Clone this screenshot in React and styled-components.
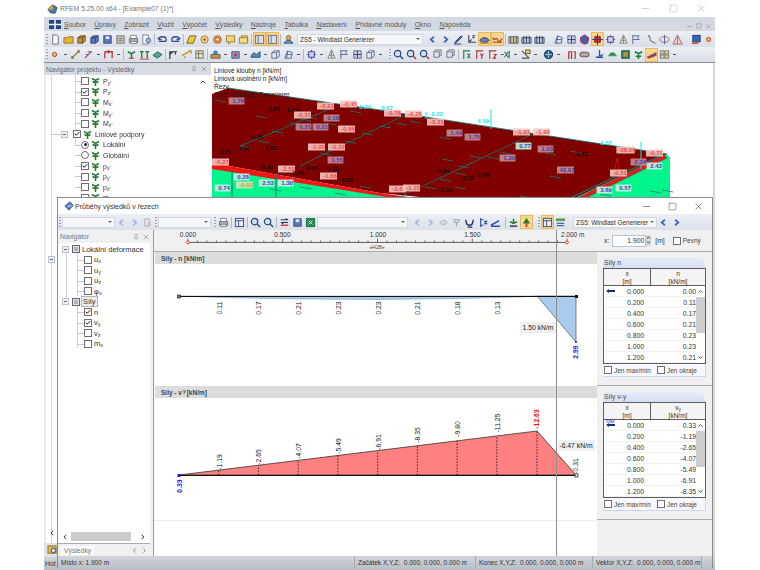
import React from 'react';
import styled, { createGlobalStyle } from 'styled-components';
import { Minus, Square, X, Check, ChevronUp, ChevronDown, ChevronLeft, ChevronRight, Pin } from 'lucide-react';

const GLYPHS = {
  doc: <path d="M3 1h4l2 2v8H3z" fill="#fff" stroke="#667" />,
  fold: <path d="M1 4h4l1-1h5v7H1z" fill="#e6b445" stroke="#9a7420" />,
  boxo: <path d="M2 4l3-2h5v6l-3 2H2zM2 4h5v6M7 4l3-2" fill="#c9913c" stroke="#6d4a18" />,
  boxb: <path d="M2 4l3-2h5v6l-3 2H2zM2 4h5v6M7 4l3-2" fill="#5a79b5" stroke="#2a3f70" />,
  save: <><rect x="2" y="2" width="8" height="8" fill="#5d78bd" stroke="#33457c" /><rect x="4" y="2.5" width="4" height="3" fill="#dfe6f5" /></>,
  calc: <><rect x="2" y="2" width="8" height="8" fill="#c9c2b2" stroke="#777" /><path d="M4 5h4M4 7h4" stroke="#777" /></>,
  print: <><rect x="3" y="1.5" width="6" height="4" fill="#fff" stroke="#888" /><rect x="1.5" y="5" width="9" height="4" fill="#aab" stroke="#777" /><rect x="3" y="8" width="6" height="2.5" fill="#eee" stroke="#888" /></>,
  prev: <><path d="M2 1h6v10H2z" fill="#fff" stroke="#778" /><circle cx="8" cy="7" r="2.5" fill="#9cc3ea" stroke="#35609a" /></>,
  undo: <path d="M2 6a4 3 0 0 1 8 0v2M2 6l-1-2M2 6l3 0M2 8h8" fill="none" stroke="#2d4b8e" strokeWidth="1.4" />,
  redo: <path d="M10 6a4 3 0 0 0-8 0v2M10 6l1-2M10 6l-3 0M2 8h8" fill="none" stroke="#2d4b8e" strokeWidth="1.4" />,
  para: <path d="M4 2h7l-3 8H1z" fill="#e9cf3e" stroke="#7a5a18" />,
  tgt: <><circle cx="6" cy="6" r="4" fill="#f2d58a" stroke="#c86a3a" /><circle cx="6" cy="6" r="1.5" fill="#d24b3a" /></>,
  ring: <><circle cx="6" cy="6" r="4.2" fill="#e8b040" stroke="#a5562a" /><circle cx="6" cy="6" r="2" fill="#fff" stroke="#c0392b" /></>,
  note: <><rect x="1.5" y="2" width="9" height="6.5" fill="#efd779" stroke="#9c8436" /><path d="M4 8.5v2.5l3-2.5" fill="#efd779" stroke="#9c8436" /></>,
  frame: <path d="M1.5 4h9v6h-9zM3.5 4V2h7v6" fill="#f5dc8c" stroke="#a07c20" />,
  pane: <><rect x="1.5" y="1.5" width="9" height="9" fill="#d9dee7" stroke="#6b6f78" /><path d="M4.5 2v8" stroke="#6b6f78" /></>,
  user: <><path d="M1 10l3-3h4l3 3z" fill="#6f96c9" stroke="#2f4f80" /><circle cx="6" cy="4" r="2.4" fill="#e6b445" stroke="#8a6a20" /></>,
  arL: <path d="M7.5 3L4 6l3.5 3" fill="none" stroke="#3a62c9" strokeWidth="1.8" />,
  arR: <path d="M4.5 3L8 6l-3.5 3" fill="none" stroke="#3a62c9" strokeWidth="1.8" />,
  fadeL: <path d="M7.5 3L4 6l3.5 3" fill="none" stroke="#a9bde6" strokeWidth="1.8" />,
  fadeR: <path d="M4.5 3L8 6l-3.5 3" fill="none" stroke="#a9bde6" strokeWidth="1.8" />,
  pen: <path d="M2 10l2-1 6-6-1-1-6 6zM1 11h8" fill="#5f83c4" stroke="#1f3560" />,
  axes: <path d="M3 1v8h8M3 9l3-3M7 2h3M7 4h2" fill="none" stroke="#444" strokeWidth="1.2" />,
  eye: <><path d="M1 7c2-4 8-4 10 0-2 3-8 3-10 0z" fill="#6f7fb5" stroke="#2a2f60" /><path d="M1 10h10" stroke="#c83" strokeWidth="1.5" /></>,
  wave: <path d="M1 4c2 5 3-2 5 2s3 2 5-1M1 9h10" fill="none" stroke="#b1342a" strokeWidth="1.3" />,
  bars: <><path d="M1 3h10v7H1z" fill="#d8c49a" stroke="#555" /><path d="M3 3v7M6 3v7M9 3v7" stroke="#555" /></>,
  barsb: <><path d="M1 4h10v6H1z" fill="#bcc9e6" stroke="#345" /><path d="M3 2v8M6 2v8M9 2v8" stroke="#345" /></>,
  star: <><path d="M2 2h8v8H2z" fill="#c8d0e8" stroke="#667" /><path d="M6 2v8M2 6h8" stroke="#33a" /></>,
  gem: <path d="M6 1l4.5 3-1 6-4 1-3.5-2-.5-5z" fill="#3a62b8" stroke="#b22" />,
  cross: <><path d="M3 3h6v6H3z" fill="#d33" stroke="#712" /><path d="M6 0v12M0 6h12" stroke="#23408a" /></>,
  tower: <path d="M6 1l4 9H2zM6 1v9M3.5 7h5" fill="#e6dfe0" stroke="#887" />,
  flag: <path d="M2 1v10M2 2h7l-2 2 2 2H2" fill="#dfe6f5" stroke="#55658a" />,
  loop: <path d="M2 2c4 0 1 5 4 6s4 1 4 3M2 2h2" fill="none" stroke="#777" strokeWidth="1.2" />,
  disc: <><ellipse cx="6" cy="6" rx="5" ry="3" fill="none" stroke="#c0604a" /><path d="M6 1v10" stroke="#3a62c9" /></>,
  warn: <path d="M6 1l5 10H1zM6 3v8" fill="#e9d6d0" stroke="#a66" />,
  mon: <><rect x="2" y="1.5" width="8" height="7" fill="#3169b5" stroke="#1b3d73" /><path d="M1 10h7" stroke="#c33" strokeWidth="1.5" /></>,
  dot: <circle cx="5" cy="6" r="2.3" fill="#e9c53e" stroke="#b33" />,
  slash: <path d="M2 10L10 2M8 2h2v2M2 8v2h2" fill="none" stroke="#8a6a1c" strokeWidth="1.3" />,
  slash2: <path d="M2 10L9 3M5 3h5M3 6h3" fill="none" stroke="#9c4f8a" strokeWidth="1.3" />,
  nodes: <path d="M2 3h8v7M2 3v7M6 1v4" fill="none" stroke="#b5342c" strokeWidth="1.4" />,
  plant: <><path d="M6 11V4M2 3l4 2 4-2" fill="none" stroke="#1d7a2c" strokeWidth="1.6" /><path d="M3 10h6" stroke="#c0392b" /></>,
  trees: <><path d="M3 4v6M9 4v6M1 3h4M7 3h4" stroke="#1d7a2c" strokeWidth="1.4" /><path d="M1 11h10" stroke="#c33" /></>,
  slab: <path d="M1 7l5-4 5 3-5 4z" fill="#4aa3b0" stroke="#2d6b2a" />,
  crane: <path d="M2 11V3h8M2 6l3-3M8 3v3" fill="none" stroke="#333" strokeWidth="1.3" />,
  beam: <path d="M1 7l8-4M8 2h3v3M3 9h2" fill="none" stroke="#c08a20" strokeWidth="1.5" />,
  grid: <path d="M2 2h8v8H2zM2 5h8M5 2v8" fill="none" stroke="#8a8258" strokeWidth="1.2" />,
  pile: <><path d="M1 6h10v4H1z" fill="#d2913c" stroke="#654" /><circle cx="6" cy="4" r="2.5" fill="#3e7ec2" /></>,
  cubeb: <><path d="M2 3h8v7H2z" fill="#89a7d8" stroke="#2c4a80" /><circle cx="6" cy="6.5" r="2" fill="#d33" /></>,
  blue: <path d="M1 8l3-4 3 2 4-3v6H1z" fill="#4e8fc2" stroke="#214f7a" />,
  cube2: <path d="M2 4l3-2h5v6l-3 2H2zM2 4h5v6M7 4l3-2" fill="#e7e9ef" stroke="#5a6a8a" />,
  net: <path d="M2 10l3-8 5 2-1 6zM5 2l-1 8M3 6l7 0" fill="none" stroke="#4b6aa5" />,
  rnode: <><path d="M1 6h10M6 1v10" stroke="#b33" /><rect x="3" y="3" width="6" height="6" fill="#ccd7ee" stroke="#33a" /></>,
  mag: <><circle cx="5" cy="5" r="3.5" fill="#cfe0f3" stroke="#27457a" strokeWidth="1.3" /><path d="M8 8l3 3" stroke="#c33" strokeWidth="1.5" /></>,
  mag2: <><circle cx="5" cy="5" r="3.5" fill="#cfe0f3" stroke="#27457a" strokeWidth="1.3" /><path d="M8 8l3 3" stroke="#27457a" strokeWidth="1.5" /></>,
  cube3: <path d="M2 3h6v6H2zM4 1h6v6H8M2 3l2-2" fill="#dfe3ea" stroke="#6c7488" />,
  rx: <path d="M2 2h8M3 2v9M7 5l3 5M10 5l-3 5" fill="none" stroke="#2f7a4a" strokeWidth="1.2" />,
  ry: <path d="M2 2h8M3 2v9M7 5l1.5 3 1.5-3M8.5 8v3" fill="none" stroke="#b3342c" strokeWidth="1.2" />,
  rz: <path d="M2 2h8M3 2v9M7 6h3l-3 4h3" fill="none" stroke="#b3342c" strokeWidth="1.2" />,
  xi: <path d="M1 6h3M5 3l4 6M9 3L5 9M10 2v8" fill="none" stroke="#2f7a4a" strokeWidth="1.2" />,
  scale: <><path d="M2 2l8 8M2 10h8" stroke="#555" strokeWidth="1.3" /><path d="M6 1h5v4H6z" fill="#e8d44a" stroke="#555" /></>,
  globe: <><circle cx="6" cy="6" r="4.5" fill="#2a66a8" stroke="#123" /><path d="M6 2v8M2 6h8" stroke="#9cc" /></>,
  curl: <path d="M3 11V3h3v8M8 3h2v8" fill="none" stroke="#a33" strokeWidth="1.3" />,
  pill: <rect x="1" y="3.5" width="10" height="5" rx="2.5" fill="#b8a6a6" stroke="#644" />,
  axisb: <path d="M6 1v7M2 9h8M6 8l4-2" fill="none" stroke="#2c4fb0" strokeWidth="1.4" />,
  hill: <><path d="M1 8c3-6 7-6 10 0z" fill="#27a86a" /><path d="M3 6c2-2 4-2 6 0z" fill="#c33" /></>,
  box3: <><rect x="2" y="2" width="8" height="8" fill="#2aa95f" stroke="#224" /><rect x="4" y="4" width="4" height="4" fill="#e08a2b" /></>,
  green: <path d="M6 11V4M2 3l4 2 4-2M3 8h6" fill="none" stroke="#1d7a2c" strokeWidth="1.7" />,
  blob: <path d="M1 9l10-5v3L3 10z" fill="#3b5cb8" stroke="#c33" />,
  four: <><rect x="1.5" y="2" width="4" height="3.5" fill="#ead990" stroke="#776" /><rect x="6.5" y="2" width="4" height="3.5" fill="#ead990" stroke="#776" /><rect x="1.5" y="6.5" width="4" height="3.5" fill="#ead990" stroke="#776" /><rect x="6.5" y="6.5" width="4" height="3.5" fill="#ead990" stroke="#776" /></>,
  tbl: <><rect x="1.5" y="1.5" width="9" height="9" fill="#e8edf7" stroke="#3a4b78" /><path d="M1.5 4h9M5 4v6" stroke="#3a4b78" /></>,
  grn: <><rect x="1" y="1.5" width="10" height="3" fill="#58a05a" /><path d="M2 7h8M2 9.5h8" stroke="#4a6aa0" strokeWidth="1.3" /></>,
  xls: <><rect x="1.5" y="1.5" width="9" height="9" fill="#2b8a4a" stroke="#175" /><path d="M4 4l4 4M8 4l-4 4" stroke="#fff" /></>,
  swap: <><path d="M2 3h7l-1.5-1.5M10 6H3l1.5 1.5" fill="none" stroke="#1e2c60" strokeWidth="1.3" /><path d="M2 9h8" stroke="#c33" strokeWidth="1.5" /></>,
  ghost: <path d="M2 6c2-3 6-3 8 0-2 3-6 3-8 0z" fill="#d8dbe0" stroke="#aab" />,
  ghost2: <path d="M2 3h8M4 3v3h4V3M6 6v4" fill="none" stroke="#9fb0a8" strokeWidth="1.2" />,
  fade: <><path d="M3 2h5v8H3z" fill="#e4e6ea" stroke="#aab" /><circle cx="8" cy="8" r="2" fill="#e5b5b5" /></>,
  cup: <path d="M2 3c0 4 2 6 4 6s4-2 4-6M4 11h5" fill="none" stroke="#1e2c60" strokeWidth="1.5" />,
  split: <path d="M4 1v10M4 3h3M4 9h3M8 4l3 4M11 4L8 8" fill="none" stroke="#2c4fa0" strokeWidth="1.2" />,
  slope: <path d="M1 9l9-5M1 10h10" fill="none" stroke="#2c4fb0" strokeWidth="1.6" />,
  sup: <><path d="M6 2v4M2 5l4 2 4-2" fill="none" stroke="#1d7a2c" strokeWidth="1.6" /><path d="M2 10h8" stroke="#555" strokeWidth="2" /></>,
  sup2: <><path d="M6 1l4 6H2z" fill="#1d7a2c" /><path d="M6 7v4" stroke="#c33" strokeWidth="2" /></>,
};

const TOP_ROW = ': doc fold boxo boxb save calc print prev | undo redo | para tgt ring note frame | pane* pane* | user _2 @126 _3 arL arR pen axes eye* wave* | bars barsb barsb _6 net star gem cross* rnode tower flag _2 loop disc warn _6 mon dot';
const SECOND_ROW = ': dot - slash slash2 - nodes - | plant trees slab | crane beam grid | pile - cubeb - blue - cube2 net - | rnode - tower flag star cube2 - _4 : mag2 mag mag cube3 cube3 | rx ry rz xi - scale - _3 globe - _3 curl pill _2 axisb hill box3 green blob* four -';
const DIALOG_ROW = ': #53 fadeL fadeR fade : #53 _2 : print | tbl | mag2 mag2 | swap save xls #91 _3 fadeL fadeR ghost ghost2 cup split slope _2 | sup sup2* _4 : tbl* grn _6 @84 arL arR';

const GEOMETRY_LABELS = [
  ['b', 238, 100, '1.76'], ['k', 274, 108, '0.03'], ['k', 293, 109, '0.24'], ['r', 304, 114, '-0.31'], ['b', 305, 126, '0.21'],
  ['b', 322, 126, '0.21'], ['r', 348, 128, '-0.66'], ['b', 333, 117, '0.18'], ['r', 327, 105, '-0.21'], ['r', 350, 103, '-0.45'],
  ['r', 318, 146, '-1.00'], ['r', 338, 146, '-0.22'], ['b', 337, 159, '1.55'], ['k', 257, 136, '0.45'], ['k', 244, 148, '4.06'],
  ['k', 271, 147, '1.03'], ['k', 225, 151, '2.75'], ['r', 222, 161, '-5.27'], ['r', 288, 168, '-2.50'], ['r', 330, 175, '-1.66'],
  ['g', 243, 176, '0.28'], ['g', 224, 187, '0.74'], ['y', 246, 184, '-0.03'], ['g', 268, 182, '2.53'], ['g', 287, 182, '1.30'],
  ['k', 267, 166, '0.19'], ['k', 312, 167, '0.83'], ['k', 298, 172, '2.43'], ['k', 333, 168, '1.28'], ['k', 347, 179, '0.55'],
  ['r', 394, 112, '-0.78'], ['r', 415, 113, '-0.26'], ['r', 437, 121, '-0.21'], ['b', 456, 132, '1.44'], ['b', 474, 136, '1.75'],
  ['c', 483, 120, '4.59'], ['r', 523, 131, '-1.93'], ['r', 543, 131, '-1.90'], ['c', 606, 142, '1.57'], ['g', 525, 145, '0.77'],
  ['b', 547, 148, '1.03'], ['b', 509, 157, '1.30'], ['b', 567, 169, '42.03'], ['r', 627, 149, '-38.06'], ['r', 656, 152, '-0.71'],
  ['b', 640, 161, '2.34'], ['g', 656, 165, '2.43'], ['r', 620, 172, '-0.51'], ['g', 606, 189, '3.69'], ['g', 625, 187, '0.57'],
  ['r', 399, 188, '-3.61'], ['r', 413, 187, '-1.15'], ['k', 582, 153, '9.71'], ['k', 446, 189, '0.34'], ['k', 468, 177, '6.39'], ['k', 483, 174, '2.08'],
  ['k', 444, 170, '9.94'], ['c', 387, 107, '0.67'], ['c', 437, 113, '0.22'], ['c', 365, 106, '0.24'],
];

const DASHES = [
  [215, 99], [256, 115], [300, 118], [325, 122], [350, 110], [240, 145], [258, 140], [272, 130], [290, 122], [306, 116],
  [320, 152], [345, 140], [362, 132], [440, 136], [488, 156], [442, 158], [500, 151], [550, 175], [458, 165], [440, 178],
  [455, 172], [410, 120], [396, 122], [380, 125], [470, 155], [520, 143], [545, 152], [570, 150], [650, 190], [662, 189],
  [235, 178], [270, 188], [300, 186], [335, 192], [360, 185], [425, 186], [455, 186], [520, 195], [600, 193],
];

const LABEL_BACK = { r: '#f4c5c0', b: '#c58b8b', g: '#c8f3e0', y: '#d3e8b8' };
const LABEL_TEXT = { r: '#ef4a4a', b: '#3d3cc0', g: '#3d3cc0', y: '#c9a040', k: '#111', c: '#19e4f0' };

const NUMBERS_N = ['0.00', '0.11', '0.17', '0.21', '0.23', '0.23', '0.21'];
const NUMBERS_V = ['0.33', '-1.19', '-2.65', '-4.07', '-5.49', '-6.91', '-8.35'];
const X_VALUES = ['0.000', '0.200', '0.400', '0.600', '0.800', '1.000', '1.200'];
const N_CHART = ['0.11', '0.17', '0.21', '0.23', '0.23', '0.21', '0.18', '0.13'];
const V_CHART = ['-1.19', '-2.65', '-4.07', '-5.49', '-6.91', '-8.35', '-9.80', '-11.25'];
const V_CENTERS = [462, 457, 451, 446, 442, 435, 429, 423];
const station = i => 179 + i * 39.73;

const Glyph = ({ kind }) => (
  <svg width="12" height="12" viewBox="0 0 12 12">{GLYPHS[kind]}</svg>
);

const Tools = ({ items, text }) => (
  <>
    {items.split(' ').map((token, i) => {
      if (token === '|') return <Sep key={i} />;
      if (token === ':') return <Grip key={i} />;
      if (token === '-') return <Caret key={i} />;
      if (token[0] === '_') return <Gap key={i} $w={Number(token.slice(1))} />;
      if (token[0] === '#' || token[0] === '@') {
        return (
          <Combo key={i} $w={Number(token.slice(1))}>
            <ComboText>{token[0] === '@' ? text : ''}</ComboText>
            <ComboArrow />
          </Combo>
        );
      }
      const active = token.endsWith('*');
      return <Tool key={i} $active={active}><Glyph kind={active ? token.slice(0, -1) : token} /></Tool>;
    })}
  </>
);

const CheckMark = ({ checked, radio, on }) => {
  if (radio) return <RadioBox>{on && <RadioDot />}</RadioBox>;
  return <Box>{checked && <Check size={6} strokeWidth={4} color="#111" />}</Box>;
};

const LeafIcon = () => (
  <svg width="9" height="9" viewBox="0 0 9 9">
    <path d="M4.5 9V3M1 1.5l3.5 2 3.5-2M1.5 4.5l3 1.5 3-1.5" fill="none" stroke="#1d7a2c" strokeWidth="1.5" />
  </svg>
);

const MainRow = ({ base, sub, checked, radio, on }) => (
  <LeafRow>
    <CheckMark checked={checked} radio={radio} on={on} />
    <LeafIcon />
    <LeafLabel>{base}{sub && <sub>{sub}</sub>}</LeafLabel>
  </LeafRow>
);

const NavLeaf = ({ base, sub, checked }) => (
  <NavLeafRow>
    <CheckMark checked={checked} />
    <NavLeafText>{base}<sub>{sub}</sub></NavLeafText>
  </NavLeafRow>
);

const ValueTable = ({ head, sub, values, flag }) => (
  <TableFrame>
    <TableHead>
      <HeadCell $w={47}>x<br />[m]</HeadCell>
      <HeadCell $w={54}>{head}{sub && <sub>{sub}</sub>}<br />[kN/m]</HeadCell>
    </TableHead>
    <TableBody>
      <div>
        {values.map((value, i) => (
          <TableRow key={value + i}>
            <MarkerCell>
              {i === 0 && (
                <>
                  {flag && <MaxTag>max</MaxTag>}
                  <svg width="9" height="4" viewBox="0 0 9 4"><path d="M0 2l3-2v1h6v2H3v1z" fill="#1a2a80" /></svg>
                </>
              )}
            </MarkerCell>
            <XCell>{X_VALUES[i]}</XCell>
            <ValueCell>{value}</ValueCell>
          </TableRow>
        ))}
      </div>
      <VScroll>
        <ChevronUp size={7} strokeWidth={3} />
        <VThumb />
        <ChevronDown size={7} strokeWidth={3} />
      </VScroll>
    </TableBody>
  </TableFrame>
);

const Group = ({ title, ...rest }) => (
  <SideGroup>
    <GroupTab>{title}</GroupTab>
    <ValueTable {...rest} />
    <GroupChecks>
      <LabelledBox><Box />Jen max/min</LabelledBox>
      <LabelledBox><Box />Jen okraje</LabelledBox>
    </GroupChecks>
  </SideGroup>
);

const Scene = () => (
  <SceneSvg viewBox="212 62 501 135" preserveAspectRatio="none">
    <path d="M212 164L380 193L575 240L670 197V157L667 153L575 197H212z" fill="#00f58c" />
    <path d="M212 93L228 87L380 109L667 153L575 197H430L380 192L212 162z" fill="#800000" />
    <path d="M212 162L380 192L430 199L437 204L212 168z" fill="#f01616" />
    <path d="M577 197L664 154L667 157L586 197z" fill="#f01616" stroke="#137a70" strokeWidth=".6" />
    <g stroke="#0c7d74" strokeWidth=".8" fill="none">
      <path d="M228 87L380 109L667 153" />
      <path d="M240 145L330 108M300 165L407 113M423 185L533 133M380 205L423 185" />
      <path d="M232 168V197M276 172V197M570 197L664 153" strokeWidth="1.1" />
      {DASHES.map(([x, y]) => <path key={`${x}-${y}`} d={`M${x} ${y}l11 2`} />)}
    </g>
    <path d="M491 108V128M641 141V168M426 111V118" stroke="#19e4f0" strokeWidth="1" />
    <path d="M617 157L620 173M617 157L614 172" stroke="#e01818" strokeWidth=".7" />
    <g fontSize="6.5" fill="#222">
      <text x="214" y="72">Liniové klouby n [kN/m]</text>
      <text x="214" y="80">Liniová uvolnění n [kN/m]</text>
      <text x="214" y="88">Řezy</text>
      <text x="214" y="96">ZS5 - Windlast Generierer</text>
    </g>
    {GEOMETRY_LABELS.map(([type, x, y, text]) => (
      <g key={`${x}-${y}`}>
        {LABEL_BACK[type] && (
          <rect x={x - 7 - text.length * 0.6} y={y - 3.5} width={11 + text.length * 1.2} height="7" fill={LABEL_BACK[type]} fillOpacity=".9" />
        )}
        <SceneLabel x={x} y={y + 2.2} fill={LABEL_TEXT[type]}>{text}</SceneLabel>
      </g>
    ))}
  </SceneSvg>
);

const Ruler = () => (
  <RulerSvg viewBox="154 230 443 22">
    {[[179, '0.000'], [278, '0.500'], [378, '1.000'], [477, '1.500'], [582, '2.000 m']].map(([x, label]) => (
      <ChartText key={label} x={x} y={237} textAnchor="middle" fill="#333">{label}</ChartText>
    ))}
    <path d="M179 243H577" stroke="#555" />
    {Array.from({ length: 41 }, (_, i) => {
      const x = 179 + i * 9.93;
      const long = i % 10 === 0;
      return <path key={i} d={`M${x} ${long ? 239 : 241}V243`} stroke="#444" strokeWidth=".8" />;
    })}
    <circle cx="179" cy="243" r="1.5" fill="#fff" stroke="#e33" />
    <circle cx="576" cy="243" r="1.5" fill="#fff" stroke="#e33" />
    <ChartText x={377} y={250} textAnchor="middle" $size={5.5} fill="#444">»H28»</ChartText>
  </RulerSvg>
);

const ForceChart = () => (
  <ChartSvg viewBox="154 264 443 122">
    <path d="M179 296L220 297.5L300 299L378 299.5L457 298.5L520 297L537 296z" fill="#a9cbee" stroke="#6f8db0" strokeWidth=".5" />
    <path d="M537 296H576V342z" fill="#a9cbee" stroke="#555" strokeWidth=".7" />
    <path d="M179 296.5H576" stroke="#111" strokeWidth="1.2" />
    <rect x="177.5" y="295" width="3" height="3" fill="#777" stroke="#111" strokeWidth=".6" />
    <rect x="575" y="295" width="3" height="3" fill="#111" />
    {N_CHART.map((value, i) => (
      <ChartText key={i} transform={`rotate(-90 ${station(i + 1) + 1} 308)`} x={station(i + 1) + 1} y={310} textAnchor="middle" fill="#222">{value}</ChartText>
    ))}
    <ChartText transform="rotate(-90 576 352)" x={576} y={354} textAnchor="middle" fill="#1a1aee" fontWeight="700">2.99</ChartText>
    <circle cx="576" cy="342" r="1" fill="#1a1aee" />
    <rect x="520" y="322" width="36" height="11" fill="#f0f0f0" />
    <ChartText x={538} y={330} textAnchor="middle" fill="#222">1.50 kN/m</ChartText>
  </ChartSvg>
);

const ShearChart = () => (
  <ChartSvg viewBox="154 398 443 122">
    <path d="M179 475L537 431L576 475z" fill="#ff8080" stroke="#333" strokeWidth=".8" />
    {V_CHART.map((value, i) => {
      const x = station(i + 1);
      return <path key={value} d={`M${x} 475V${475 - 44 * ((x - 179) / 358)}`} stroke="#111" strokeWidth=".8" strokeDasharray="1.5 1.5" />;
    })}
    <path d="M537 475V431" stroke="#111" strokeWidth=".8" strokeDasharray="1.5 1.5" />
    <path d="M179 475.5H577" stroke="#111" strokeWidth="1.2" />
    <rect x="177.5" y="474" width="3" height="3" fill="#1a1aee" />
    <rect x="575" y="474" width="3" height="3" fill="#fff" stroke="#111" strokeWidth=".7" />
    {V_CHART.map((value, i) => (
      <ChartText key={i} transform={`rotate(-90 ${station(i + 1) + 1} ${V_CENTERS[i]})`} x={station(i + 1) + 1} y={V_CENTERS[i] + 2} textAnchor="middle" fill="#222">{value}</ChartText>
    ))}
    <ChartText transform="rotate(-90 537 419)" x={537} y={421} textAnchor="middle" fill="#f01010" fontWeight="700">-12.63</ChartText>
    <ChartText transform="rotate(-90 576 466)" x={576} y={468} textAnchor="middle" fill="#222">-0.31</ChartText>
    <ChartText transform="rotate(-90 180 486)" x={180} y={488} textAnchor="middle" fill="#1a1aee" fontWeight="700">0.33</ChartText>
    <rect x="558" y="440" width="37" height="11" fill="#f0f0f0" />
    <ChartText x={576} y={448} textAnchor="middle" fill="#222">-6.47 kN/m</ChartText>
  </ChartSvg>
);

export default function App() {
  const menu = ['Soubor', 'Úpravy', 'Zobrazit', 'Vložit', 'Výpočet', 'Výsledky', 'Nástroje', 'Tabulka', 'Nastavení', 'Přídavné moduly', 'Okno', 'Nápověda'];
  return (
    <>
      <Global />
      <Page>
        <MainWindow>
          <TitleBar>
            <svg width="11" height="11" viewBox="0 0 12 12"><path d="M1 7l5-5 5 3-2 6-5 0z" fill="#4d78ad" stroke="#34506e" /><path d="M6 2l1 5-6 0" fill="#d9a441" /></svg>
            <TitleText>RFEM 5.25.00 x64 - [Example07 (1)*]</TitleText>
            <WindowButtons $gap={18} $faded>
              <Minus size={11} strokeWidth={1} />
              <Square size={9} strokeWidth={1} />
              <X size={11} strokeWidth={1} />
            </WindowButtons>
          </TitleBar>
          <MenuBar>
            <svg width="12" height="9" viewBox="0 0 12 9"><rect width="12" height="9" fill="#23438a" /><path d="M0 4.5h12M6 0v9" stroke="#fff" strokeWidth="1.5" /></svg>
            <MenuItems>
              {menu.map(item => <MenuItem key={item}><u>{item[0]}</u>{item.slice(1)}</MenuItem>)}
            </MenuItems>
            <MdiButtons>
              <Minus size={7} strokeWidth={2} />
              <Square size={6} strokeWidth={2} />
              <X size={7} strokeWidth={2} />
            </MdiButtons>
          </MenuBar>
          <ToolRow><Tools items={TOP_ROW} text="ZS5 - Windlast Generierer" /></ToolRow>
          <ToolRow $last><Tools items={SECOND_ROW} /></ToolRow>
          <Workspace>
            <ProjectNav>
              <PaneHeader>
                <span>Navigátor projektu - Výsledky</span>
                <PaneIcons><Pin size={6} /><X size={8} /></PaneIcons>
              </PaneHeader>
              <ProjectTree>
                <ScrollHint><ChevronUp size={8} strokeWidth={3} /></ScrollHint>
                <MainRow base="P" sub="y'" />
                <MainRow base="P" sub="z'" checked />
                <MainRow base="M" sub="x'" />
                <MainRow base="M" sub="y'" />
                <MainRow base="M" sub="z'" />
                <ParentRow>
                  <Toggle />
                  <CheckMark checked />
                  <LeafIcon />
                  <LeafLabel>Liniové podpory</LeafLabel>
                </ParentRow>
                <MainRow base="Lokální" radio on />
                <MainRow base="Globální" radio />
                <MainRow base="p" sub="x'" checked />
                <MainRow base="p" sub="y'" />
                <MainRow base="p" sub="z'" />
                <MainRow base="m" sub="x'" />
                <StubToggle><Toggle /></StubToggle>
                <BottomScroll><ChevronLeft size={8} strokeWidth={3} /></BottomScroll>
              </ProjectTree>
              <TabStrip>
                <svg width="11" height="10" viewBox="0 0 12 11"><rect x="1" y="1" width="9" height="8" fill="#e8b64a" stroke="#8a6a20" /><circle cx="7" cy="6" r="2.5" fill="#cfe0f3" stroke="#27457a" /></svg>
              </TabStrip>
            </ProjectNav>
            <Viewport><Scene /></Viewport>
          </Workspace>
          <MainStatus>Hot</MainStatus>
        </MainWindow>

        <Dialog>
          <DialogTitle>
            <svg width="10" height="10" viewBox="0 0 12 12"><path d="M1 6l6-5 4 4-5 6z" fill="#5b84b8" stroke="#2f5080" /><path d="M4 6h5" stroke="#dfe8f5" /></svg>
            <DialogTitleText>Průběhy výsledků v řezech</DialogTitleText>
            <WindowButtons $gap={16}>
              <Minus size={11} strokeWidth={1.2} />
              <Square size={9} strokeWidth={1.2} />
              <X size={11} strokeWidth={1.2} />
            </WindowButtons>
          </DialogTitle>
          <DialogTools><Tools items={DIALOG_ROW} text="ZS5: Windlast Generierer" /></DialogTools>
          <DialogBody>
            <DialogNav>
              <PaneHeaderLight>
                <span>Navigátor</span>
                <PaneIcons><Pin size={6} /><X size={8} /></PaneIcons>
              </PaneHeaderLight>
              <DialogTree>
                <TreeHead><Toggle /><SquareMark /><span>Lokální deformace</span></TreeHead>
                <NavLeaf base="u" sub="x" />
                <NavLeaf base="u" sub="y" />
                <NavLeaf base="u" sub="z" />
                <NavLeaf base="φ" sub="x" />
                <TreeHead><Toggle /><SquareMark /><Focused>Síly</Focused></TreeHead>
                <NavLeaf base="n" checked />
                <NavLeaf base="v" sub="y" checked />
                <NavLeaf base="v" sub="z" />
                <NavLeaf base="m" sub="x" />
                <HScroll>
                  <ChevronLeft size={8} strokeWidth={3} />
                  <HThumb />
                  <ChevronRight size={8} strokeWidth={3} />
                </HScroll>
              </DialogTree>
              <NavTabs>
                <NavTab>Výsledky</NavTab>
                <TabArrows><ChevronLeft size={7} strokeWidth={3} /><ChevronRight size={7} strokeWidth={3} /></TabArrows>
              </NavTabs>
            </DialogNav>
            <ChartColumn>
              <Ruler />
              <SectionHead>Síly - n [kN/m]</SectionHead>
              <ForceChart />
              <SectionHead>Síly - v<sub>y</sub> [kN/m]</SectionHead>
              <ShearChart />
              <ChartFoot />
              <CursorLine />
            </ChartColumn>
            <SidePanel>
              <XRow>
                <span>x:</span>
                <XInput>1.900</XInput>
                <Spinner><ChevronUp size={5} strokeWidth={4} /><ChevronDown size={5} strokeWidth={4} /></Spinner>
                <XUnit>[m]</XUnit>
                <LabelledBox><Box />Pevný</LabelledBox>
              </XRow>
              <SideSection>
                <Group title="Síly n" head="n" values={NUMBERS_N} />
              </SideSection>
              <SideSection>
                <Group title="Síly v-y" head="v" sub="y" values={NUMBERS_V} flag />
              </SideSection>
            </SidePanel>
          </DialogBody>
          <DialogStatus>
            <StatusCell $grow>Místo x: 1.900 m</StatusCell>
            <StatusCell $w={121}>Začátek X,Y,Z:&nbsp;&nbsp;0.000, 0.000, 0.000 m</StatusCell>
            <StatusCell $w={117}>Konec X,Y,Z:&nbsp;&nbsp;0.000, 0.000, 0.000 m</StatusCell>
            <StatusCell $w={109}>Vektor X,Y,Z:&nbsp;&nbsp;0.000, 0.000, 0.000 m</StatusCell>
            <StatusCell $w={11} />
          </DialogStatus>
        </Dialog>
      </Page>
    </>
  );
}

const Global = createGlobalStyle`
  html, body {
    margin: 0;
    background: #fff;
    overflow: hidden;
  }
  sub {
    font-size: 0.75em;
    line-height: 0;
    vertical-align: -0.2em;
  }
`;

const Page = styled.div`
  position: relative;
  width: 760px;
  height: 570px;
  padding-left: 44px;
  box-sizing: border-box;
  font-family: "Liberation Sans", Arial, sans-serif;
  font-size: 6.8px;
  color: #333;
  filter: blur(0.45px);
`;

const MainWindow = styled.div`
  display: flex;
  flex-direction: column;
  width: 671px;
  height: 570px;
`;

const TitleBar = styled.div`
  display: flex;
  align-items: center;
  height: 17px;
  padding-left: 3px;
  background: #fff;
  flex: none;
`;

const TitleText = styled.span`
  margin-left: 2px;
  color: #777;
`;

const WindowButtons = styled.div`
  display: flex;
  align-items: center;
  gap: ${p => p.$gap}px;
  margin-left: auto;
  padding-right: 8px;
  color: ${p => (p.$faded ? '#999' : '#333')};
`;

const MenuBar = styled.div`
  display: flex;
  align-items: center;
  height: 14px;
  padding-left: 5px;
  background: #d3d9e3;
  flex: none;
`;

const MenuItems = styled.div`
  display: flex;
  gap: 8.4px;
  margin-left: 3px;
`;

const MenuItem = styled.span`
  color: #555;
`;

const MdiButtons = styled.div`
  display: flex;
  align-items: center;
  gap: 3px;
  margin-left: auto;
  padding: 4px 3px 0 0;
  color: #888;
`;

const ToolRow = styled.div`
  display: flex;
  align-items: center;
  height: ${p => (p.$last ? 15 : 16)}px;
  padding-left: 1px;
  background: linear-gradient(#eceff4, #d9dee7);
  border-bottom: ${p => (p.$last ? '1px solid #8a8d92' : '0')};
  flex: none;
  overflow: hidden;
`;

const DialogTools = styled.div`
  display: flex;
  align-items: center;
  height: 16px;
  background: linear-gradient(#eceff4, #dde1e9);
  flex: none;
  overflow: hidden;
`;

const Tool = styled.div`
  display: flex;
  align-items: center;
  justify-content: center;
  width: 13px;
  height: 14px;
  flex: none;
  box-sizing: border-box;
  background: ${p => (p.$active ? '#fbd68a' : 'transparent')};
  box-shadow: ${p => (p.$active ? 'inset 0 0 0 1px #e9b96a' : 'none')};
  & svg {
    width: 11px;
    height: 11px;
  }
`;

const Sep = styled.div`
  width: 1px;
  height: 11px;
  margin: 0 1px;
  background: #b4b9c2;
  flex: none;
`;

const Grip = styled.div`
  width: 2px;
  height: 11px;
  margin: 0 1px;
  flex: none;
  background: repeating-linear-gradient(#9aa0aa 0 1px, transparent 1px 3px);
`;

const Caret = styled.div`
  width: 7px;
  height: 1px;
  flex: none;
  background: linear-gradient(90deg, transparent 2px, #555 2px 5px, transparent 5px);
`;

const Gap = styled.div`
  width: ${p => p.$w}px;
  flex: none;
`;

const Combo = styled.div`
  display: flex;
  align-items: center;
  justify-content: space-between;
  width: ${p => p.$w}px;
  height: 11px;
  background: #f6f7f9;
  border: 1px solid #d5d8de;
  box-sizing: border-box;
  flex: none;
`;

const ComboText = styled.span`
  padding-left: 2px;
  font-size: 6.4px;
  white-space: nowrap;
  color: #333;
`;

const ComboArrow = styled.span`
  width: 0;
  height: 0;
  margin-right: 2px;
  flex: none;
  border-left: 2px solid transparent;
  border-right: 2px solid transparent;
  border-top: 2px solid #666;
`;

const Workspace = styled.div`
  display: flex;
  flex: 1;
  min-height: 0;
`;

const ProjectNav = styled.div`
  display: flex;
  flex-direction: column;
  width: 167px;
  background: #e9ebef;
  flex: none;
`;

const PaneHeader = styled.div`
  display: flex;
  align-items: center;
  justify-content: space-between;
  height: 12px;
  padding: 0 3px 0 2px;
  background: #d7dce4;
  color: #666;
  font-size: 6.8px;
  flex: none;
`;

const PaneHeaderLight = styled(PaneHeader)`
  height: 13px;
  background: #eff0f2;
  color: #777;
`;

const PaneIcons = styled.div`
  display: flex;
  align-items: center;
  gap: 3px;
  color: #888;
`;

const ProjectTree = styled.div`
  position: relative;
  display: flex;
  flex-direction: column;
  flex: 1;
  margin-left: 2px;
  padding-top: 1px;
  background-color: #fff;
  background-image:
    linear-gradient(#d6d6d6, #d6d6d6),
    linear-gradient(#d6d6d6, #d6d6d6);
  background-size: 1px 100%, 1px 70px;
  background-position: 5px 0, 29px 0;
  background-repeat: no-repeat;
`;

const ScrollHint = styled.div`
  position: absolute;
  right: 4px;
  top: 3px;
  display: flex;
  color: #444;
`;

const LeafRow = styled.div`
  position: relative;
  display: flex;
  align-items: center;
  gap: 2px;
  height: 10.6px;
  padding-left: 35px;
  flex: none;
  &::before {
    content: '';
    position: absolute;
    left: 29px;
    top: 5px;
    width: 6px;
    height: 1px;
    background: #c9c9c9;
  }
`;

const ParentRow = styled(LeafRow)`
  padding-left: 15px;
  &::before {
    left: 5px;
    width: 10px;
  }
`;

const LeafLabel = styled.span`
  margin-left: 1px;
  font-size: 7px;
  color: #333;
`;

const Toggle = styled.span`
  position: relative;
  width: 5px;
  height: 5px;
  margin-right: 3px;
  border: 1px solid #bcc2cc;
  background: #eef1f6;
  flex: none;
  &::after {
    content: '';
    position: absolute;
    left: 1px;
    top: 2px;
    width: 3px;
    height: 1px;
    background: #667;
  }
`;

const Box = styled.span`
  display: inline-flex;
  align-items: center;
  justify-content: center;
  width: 6px;
  height: 6px;
  border: 1px solid #6f6f6f;
  background: #fff;
  box-sizing: content-box;
  flex: none;
`;

const RadioBox = styled(Box)`
  border-radius: 50%;
`;

const RadioDot = styled.span`
  width: 3px;
  height: 3px;
  border-radius: 50%;
  background: #222;
`;

const StubToggle = styled.div`
  display: flex;
  margin-top: 53px;
  padding-left: 2px;
`;

const BottomScroll = styled.div`
  display: flex;
  margin-top: auto;
  padding: 0 0 6px 2px;
  color: #333;
`;

const TabStrip = styled.div`
  display: flex;
  align-items: center;
  height: 14px;
  padding-left: 3px;
  background: #e0e2e6;
  flex: none;
`;

const Viewport = styled.div`
  flex: 1;
  margin-left: 1px;
  border-right: 2px solid #d8d8d8;
  background: #fff;
  min-width: 0;
`;

const SceneSvg = styled.svg`
  display: block;
  width: 501px;
  height: 135px;
  font-family: "Liberation Sans", Arial, sans-serif;
`;

const SceneLabel = styled.text`
  font-size: 6px;
  font-weight: 700;
  text-anchor: middle;
`;

const MainStatus = styled.div`
  display: flex;
  align-items: center;
  height: 13px;
  padding-left: 1px;
  background: linear-gradient(#d0d4da, #b9bdc4);
  flex: none;
`;

const Dialog = styled.div`
  position: absolute;
  left: 57px;
  top: 197px;
  display: flex;
  flex-direction: column;
  width: 656px;
  height: 371px;
  box-sizing: border-box;
  border: 1px solid #8c8c8c;
  border-bottom: 0;
  background: #f0f0f0;
`;

const DialogTitle = styled.div`
  display: flex;
  align-items: center;
  height: 16px;
  padding-left: 6px;
  background: #fff;
  flex: none;
`;

const DialogTitleText = styled.span`
  margin-left: 1px;
  font-size: 7px;
  color: #333;
`;

const DialogBody = styled.div`
  display: flex;
  flex: 1;
  min-height: 0;
`;

const DialogNav = styled.div`
  display: flex;
  flex-direction: column;
  width: 95px;
  flex: none;
`;

const DialogTree = styled.div`
  display: flex;
  flex-direction: column;
  flex: 1;
  margin: 0 3px 0 0;
  padding-top: 1px;
  background: #fff;
  border-bottom: 1px solid #aaa;
  background-image:
    linear-gradient(#d0d0d0, #d0d0d0),
    linear-gradient(#d0d0d0, #d0d0d0),
    linear-gradient(#d0d0d0, #d0d0d0);
  background-size: 1px 55px, 1px 43px, 1px 43px;
  background-position: 8px 6px, 19px 10px, 19px 62px;
  background-repeat: no-repeat;
`;

const TreeHead = styled.div`
  display: flex;
  align-items: center;
  height: 10.5px;
  padding-left: 4px;
  font-size: 7.5px;
  color: #333;
  flex: none;
`;

const SquareMark = styled.span`
  width: 6px;
  height: 6px;
  margin-right: 2px;
  border: 1px solid #666;
  background: #aeb3ba;
  box-shadow: inset 0 0 0 1px #e7e7e7;
  flex: none;
`;

const Focused = styled.span`
  padding: 0 1px;
  outline: 1px solid #b5b5b5;
  background: #ededed;
`;

const NavLeafRow = styled.div`
  position: relative;
  display: flex;
  align-items: center;
  height: 10.5px;
  padding-left: 26px;
  flex: none;
  &::before {
    content: '';
    position: absolute;
    left: 19px;
    top: 5px;
    width: 7px;
    height: 1px;
    background: #c9c9c9;
  }
`;

const NavLeafText = styled.span`
  margin-left: 2px;
  font-size: 7.5px;
  color: #333;
`;

const HScroll = styled.div`
  display: flex;
  align-items: center;
  height: 9px;
  margin-top: auto;
  margin-bottom: 2px;
  padding: 0 3px;
  color: #333;
`;

const HThumb = styled.div`
  width: 62px;
  height: 9px;
  margin: 0 8px 0 2px;
  background: #cdcdcd;
`;

const NavTabs = styled.div`
  display: flex;
  align-items: center;
  justify-content: space-between;
  height: 12px;
  padding: 0 5px 0 3px;
  flex: none;
`;

const NavTab = styled.span`
  padding: 1px 3px;
  background: #fbfbfb;
  color: #777;
`;

const TabArrows = styled.div`
  display: flex;
  gap: 3px;
  color: #777;
`;

const ChartColumn = styled.div`
  position: relative;
  display: flex;
  flex-direction: column;
  width: 444px;
  background: #fff;
  border-left: 1px solid #9b9b9b;
  box-sizing: border-box;
  flex: none;
`;

const RulerSvg = styled.svg`
  display: block;
  width: 443px;
  height: 22px;
  flex: none;
  background: #f0f0f0;
  border-bottom: 1px solid #aaa;
  box-sizing: border-box;
  font-family: "Liberation Sans", Arial, sans-serif;
`;

const ChartSvg = styled.svg`
  display: block;
  width: 443px;
  height: 122px;
  flex: none;
  font-family: "Liberation Sans", Arial, sans-serif;
`;

const ChartText = styled.text`
  font-size: ${p => p.$size || 6.8}px;
`;

const SectionHead = styled.div`
  display: flex;
  align-items: center;
  height: 12px;
  margin: 0 0 0 1px;
  padding-left: 6px;
  background: #dcdcdc;
  color: #444;
  font-weight: 700;
  font-size: 6.5px;
  flex: none;
  & sub {
    margin: 0 1px;
  }
`;

const ChartFoot = styled.div`
  flex: 1;
  border-top: 1px solid #eee;
`;

const CursorLine = styled.div`
  position: absolute;
  left: 402px;
  top: 0;
  bottom: 0;
  width: 1px;
  background: #8e8e8e;
`;

const SidePanel = styled.div`
  display: flex;
  flex-direction: column;
  flex: 1;
  min-width: 0;
`;

const XRow = styled.div`
  display: flex;
  align-items: center;
  height: 22px;
  padding-left: 7px;
  border-bottom: 1px solid #aaa;
  box-sizing: border-box;
  flex: none;
`;

const XInput = styled.div`
  width: 31px;
  height: 10px;
  margin-left: 3px;
  padding-right: 1px;
  line-height: 10px;
  text-align: right;
  background: #fff;
  border: 1px solid #b6c4d6;
  box-sizing: content-box;
`;

const Spinner = styled.div`
  display: flex;
  flex-direction: column;
  width: 5px;
  height: 11px;
  background: #d8d8d8;
  color: #222;
`;

const XUnit = styled.span`
  margin: 0 8px 0 4px;
`;

const LabelledBox = styled.label`
  display: flex;
  align-items: center;
  gap: 2px;
  font-size: 6.5px;
  color: #444;
`;

const SideSection = styled.div`
  height: 134px;
  padding: 6px 6px 0;
  box-sizing: border-box;
  border-bottom: 1px solid #aaa;
  flex: none;
`;

const SideGroup = styled.div`
  display: flex;
  flex-direction: column;
`;

const GroupTab = styled.div`
  height: 10px;
  padding-left: 1px;
  line-height: 10px;
  background: linear-gradient(#e6ecf9, #d5def3);
  color: #445;
  clip-path: polygon(0 0, 96% 0, 100% 100%, 0 100%);
`;

const TableFrame = styled.div`
  border: 1px solid #5d5d5d;
  background: #fff;
  box-sizing: border-box;
  width: 103px;
`;

const TableHead = styled.div`
  display: flex;
  height: 16px;
  border-bottom: 1px solid #5d5d5d;
  background: #f4f4f4;
`;

const HeadCell = styled.div`
  width: ${p => p.$w}px;
  text-align: center;
  line-height: 7.5px;
  padding-top: 1px;
  box-sizing: border-box;
  color: #333;
  font-size: 6.5px;
  &:first-child {
    border-right: 1px solid #5d5d5d;
  }
`;

const TableBody = styled.div`
  display: flex;
  justify-content: space-between;
  height: 77px;
  overflow: hidden;
`;

const TableRow = styled.div`
  display: flex;
  align-items: center;
  height: 11px;
  width: 92px;
  border-bottom: 1px solid #f2f2f2;
  box-sizing: border-box;
`;

const MarkerCell = styled.div`
  position: relative;
  display: flex;
  align-items: center;
  justify-content: center;
  width: 13px;
  height: 100%;
  background: #fff;
  flex: none;
`;

const MaxTag = styled.span`
  position: absolute;
  left: 2px;
  top: -1px;
  font-size: 4.5px;
  line-height: 5px;
  color: #1a2ae0;
`;

const XCell = styled.div`
  width: 27px;
  text-align: right;
  flex: none;
`;

const ValueCell = styled.div`
  width: 52px;
  text-align: right;
  flex: none;
`;

const VScroll = styled.div`
  display: flex;
  flex-direction: column;
  align-items: center;
  justify-content: space-between;
  width: 9px;
  padding: 2px 0;
  box-sizing: border-box;
  color: #333;
`;

const VThumb = styled.div`
  width: 9px;
  height: 36px;
  margin-bottom: auto;
  margin-top: 2px;
  background: #cdcdcd;
`;

const GroupChecks = styled.div`
  display: flex;
  align-items: center;
  justify-content: space-between;
  height: 13px;
  padding: 0 8px 0 1px;
  background: #f7f8fd;
  border-bottom: 1px solid #c9d4ee;
  border-right: 1px solid #c9d4ee;
  box-sizing: border-box;
`;

const DialogStatus = styled.div`
  display: flex;
  align-items: stretch;
  height: 12px;
  background: linear-gradient(#d2d6dc, #bcc0c7);
  flex: none;
`;

const StatusCell = styled.div`
  display: flex;
  align-items: center;
  padding-left: 3px;
  box-sizing: border-box;
  white-space: nowrap;
  overflow: hidden;
  color: #333;
  font-size: 6.5px;
  ${p => (p.$grow ? 'flex: 1;' : `width: ${p.$w}px; flex: none; border-left: 1px solid #a5a8ae;`)}
`;
